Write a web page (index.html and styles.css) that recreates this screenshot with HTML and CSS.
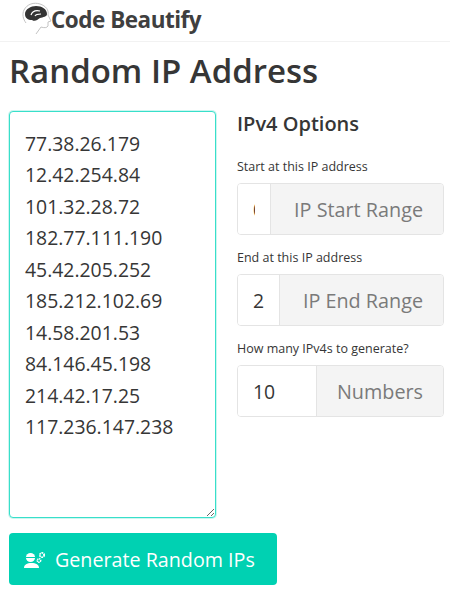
FILE: index.html
```html
<!DOCTYPE html>
<html lang="en">
<head>
    <meta charset="UTF-8">
    <meta name="viewport" content="width=device-width, initial-scale=1.0">
    <title>Random IP Address</title>
    <link rel="stylesheet" href="styles.css">
</head>
<body>
    <nav class="navbar">
        <a class="brand" href="#">
            <svg class="brand-logo" width="30" height="33" viewBox="0 0 30 33">
                <path d="M4 21 C1 17 0 12 2 8 C5 2 12 0 18 2 C24 4 27 8 26 13 L29 19 L26 20 L26 24 C25 26 22 26 19 25 L14 32" fill="none" stroke="#c4c4c4" stroke-width="1"/>
                <path d="M3 12 C3 7 9 4 14 4 C20 4 25 7 25 12 C25 15 21 15 18 16 C15 18 13 20 10 18 C6 18 3 16 3 12 Z" fill="#333"/>
                <path d="M9 13 C10 10 13 8 18 9 M13 14 C14 12 16 12 19 12" fill="none" stroke="#fff" stroke-width="1.2"/>
            </svg>
            <span class="brand-name">Code Beautify</span>
        </a>
    </nav>

    <div class="container">
        <h1>Random IP Address</h1>

        <div class="tool">
            <textarea class="output" spellcheck="false">77.38.26.179
12.42.254.84
101.32.28.72
182.77.111.190
45.42.205.252
185.212.102.69
14.58.201.53
84.146.45.198
214.42.17.25
117.236.147.238</textarea>

            <form class="options">
                <h2>IPv4 Options</h2>

                <label for="ip-start">Start at this IP address</label>
                <div class="input-group">
                    <input type="text" id="ip-start" class="input-start" value="0.0.0.0">
                    <span class="addon">IP Start Range</span>
                </div>

                <label for="ip-end">End at this IP address</label>
                <div class="input-group">
                    <input type="text" id="ip-end" class="input-end" value="255.255.255.255">
                    <span class="addon">IP End Range</span>
                </div>

                <label for="ip-count">How many IPv4s to generate?</label>
                <div class="input-group">
                    <input type="text" id="ip-count" class="input-count" value="10">
                    <span class="addon">Numbers</span>
                </div>
            </form>
        </div>

        <button type="button" class="generate-btn">
            <svg width="22" height="18" viewBox="0 0 22 18" fill="#fff">
                <circle cx="6.5" cy="6.5" r="4.6"/>
                <rect x="1.5" y="6" width="10" height="1" fill="#00d1b2"/>
                <path d="M0 17 C0 13.5 3 12 7.5 12 C12 12 15 13.5 15 17 Z"/>
                <circle cx="18" cy="4" r="2.2" fill="none" stroke="#fff" stroke-width="1.8" stroke-dasharray="1.6 0.6"/>
                <circle cx="15" cy="9.5" r="1.7" fill="none" stroke="#fff" stroke-width="1.5" stroke-dasharray="1.3 0.5"/>
            </svg>
            Generate Random IPs
        </button>
    </div>
</body>
</html>
```

FILE: styles.css
```css
body {
    font-family: 'Open Sans', 'Noto Sans', sans-serif;
    color: #363636;
    background-color: #fff;
    margin: 0;
    padding: 0;
    overflow: hidden;
}

.navbar {
    height: 42px;
    padding-left: 22px;
    border-bottom: 1px solid #f2f2f2;
    box-sizing: border-box;
}

.brand {
    display: flex;
    align-items: flex-start;
    padding-top: 2px;
    color: #3f3f3f;
    text-decoration: none;
}

.brand-name {
    font-size: 22.5px;
    font-weight: 700;
    letter-spacing: -0.5px;
    line-height: 30px;
    margin-top: 3px;
    margin-left: -1px;
}

.container {
    padding: 0 6px 0 9px;
}

h1 {
    font-size: 33px;
    font-weight: 600;
    line-height: 40px;
    margin: 9px 0 20px;
}

.tool {
    display: flex;
    gap: 21px;
}

.output {
    width: 207px;
    height: 407px;
    box-sizing: border-box;
    padding: 16px 15px;
    border: 1px solid #38dfca;
    border-radius: 4px;
    box-shadow: 0 0 0 1px rgba(0, 209, 178, 0.2);
    font-family: inherit;
    font-size: 19.4px;
    line-height: 31.45px;
    color: #363636;
    outline: none;
}

.options {
    flex: 1;
}

h2 {
    font-size: 20px;
    font-weight: 600;
    line-height: 26px;
    margin: 0 0 21px;
}

label {
    display: block;
    font-size: 12.5px;
    line-height: 18px;
    margin-bottom: 7px;
}

.input-group {
    display: flex;
    height: 52px;
    margin-bottom: 14px;
    border: 1px solid #e4e4e4;
    border-radius: 4px;
    box-sizing: border-box;
    overflow: hidden;
}

.input-group input {
    border: none;
    border-right: 1px solid #e4e4e4;
    box-sizing: border-box;
    padding: 0 15px;
    font-family: inherit;
    font-size: 19.4px;
    color: #363636;
    outline: none;
    min-width: 0;
}

.input-start {
    width: 33px;
}

.input-end {
    width: 42px;
}

.input-count {
    width: 79px;
}

.addon {
    flex: 1;
    display: flex;
    align-items: center;
    justify-content: flex-end;
    padding: 1px 20px 0 0;
    background-color: #f4f4f4;
    color: #7a7a7a;
    font-size: 19.8px;
    white-space: nowrap;
}

.generate-btn {
    display: flex;
    align-items: center;
    gap: 9px;
    width: 268px;
    height: 52px;
    margin-top: 15px;
    padding: 1px 0 0 15px;
    background-color: #00d1b2;
    color: #fff;
    border: none;
    border-radius: 4px;
    font-family: inherit;
    font-size: 19.7px;
    cursor: pointer;
}
```
